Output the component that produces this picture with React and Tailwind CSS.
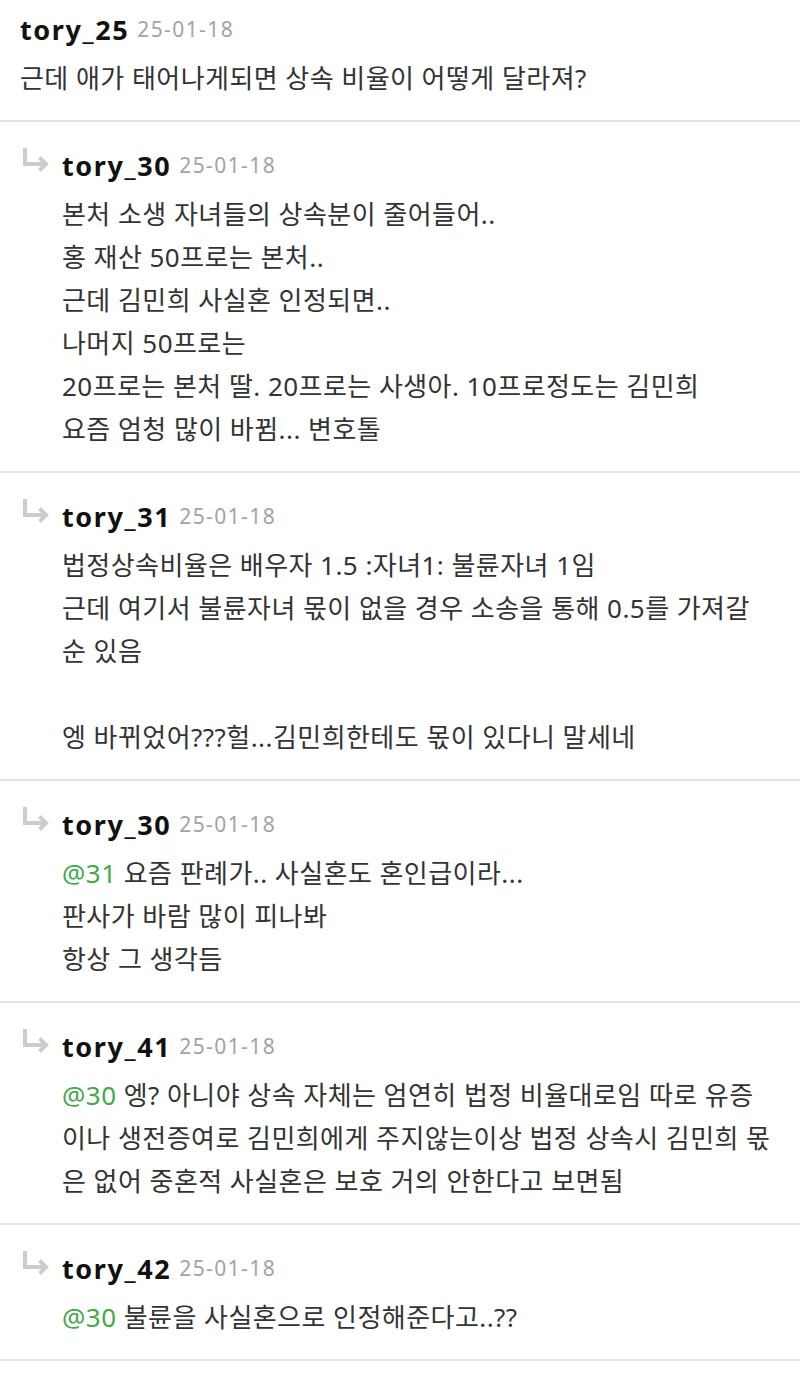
import React from "react";

const comments = [
  {
    name: "tory_25",
    date: "25-01-18",
    reply: false,
    lines: ["근데 애가 태어나게되면 상속 비율이 어떻게 달라져?"],
  },
  {
    name: "tory_30",
    date: "25-01-18",
    reply: true,
    lines: [
      "본처 소생 자녀들의 상속분이 줄어들어..",
      "홍 재산 50프로는 본처..",
      "근데 김민희 사실혼 인정되면..",
      "나머지 50프로는",
      "20프로는 본처 딸. 20프로는 사생아. 10프로정도는 김민희",
      "요즘 엄청 많이 바뀜... 변호톨",
    ],
  },
  {
    name: "tory_31",
    date: "25-01-18",
    reply: true,
    lines: [
      "법정상속비율은 배우자 1.5 :자녀1: 불륜자녀 1임",
      "근데 여기서 불륜자녀 몫이 없을 경우 소송을 통해 0.5를 가져갈",
      "순 있음",
      "",
      "엥 바뀌었어???헐...김민희한테도 몫이 있다니 말세네",
    ],
  },
  {
    name: "tory_30",
    date: "25-01-18",
    reply: true,
    mention: "@31",
    lines: ["요즘 판례가.. 사실혼도 혼인급이라...", "판사가 바람 많이 피나봐", "항상 그 생각듬"],
  },
  {
    name: "tory_41",
    date: "25-01-18",
    reply: true,
    mention: "@30",
    lines: [
      "엥? 아니야 상속 자체는 엄연히 법정 비율대로임 따로 유증",
      "이나 생전증여로 김민희에게 주지않는이상 법정 상속시 김민희 몫",
      "은 없어 중혼적 사실혼은 보호 거의 안한다고 보면됨",
    ],
  },
  {
    name: "tory_42",
    date: "25-01-18",
    reply: true,
    mention: "@30",
    lines: ["불륜을 사실혼으로 인정해준다고..??"],
  },
];

const ReplyArrow = () => (
  <svg width="28" height="26" viewBox="0 0 28 26" fill="none" stroke="#cccccc" strokeWidth="4" strokeLinecap="butt" strokeLinejoin="miter">
    <path d="M4 0 V16 H25" />
    <path d="M18.5 9.5 L25 16 L18.5 22.5" />
  </svg>
);

const Comment = ({ c, first }) => {
  return (
    <div className={`flex border-b-2 border-[#e3e3e3] ${first ? "pt-[10px]" : "pt-[24px]"} pb-[20px]`}>
      {c.reply ? (
        <div className="w-[62px] shrink-0 pl-[21px] pt-[2px]">
          <ReplyArrow />
        </div>
      ) : (
        <div className="w-[20px] shrink-0" />
      )}
      <div className="flex-1 min-w-0">
        <div className="flex items-center h-[40px] mb-[7px] gap-[8px] whitespace-nowrap">
          <span className="text-[27px] font-bold text-[#111111] tracking-[1.6px]">{c.name}</span>
          <span className="text-[21px] text-[#a3a3a3] tracking-[1.4px]">{c.date}</span>
        </div>
        <div className="text-[26px] leading-[43px] tracking-[0.45px] text-[#333333]">
          {c.lines.map((line, i) => (
            <div key={i} className="whitespace-nowrap h-[43px]">
              {i === 0 && c.mention ? <span className="text-[#43a94b]">{c.mention} </span> : null}
              {line}
            </div>
          ))}
        </div>
      </div>
    </div>
  );
};

export default function App() {
  return (
    <div
      className="w-[800px] min-h-[1376px] bg-white overflow-hidden"
      style={{ fontFamily: '"Noto Sans", "Noto Sans CJK KR", sans-serif' }}
    >
      {comments.map((c, i) => (
        <Comment key={i} c={c} first={i === 0} />
      ))}
    </div>
  );
}
